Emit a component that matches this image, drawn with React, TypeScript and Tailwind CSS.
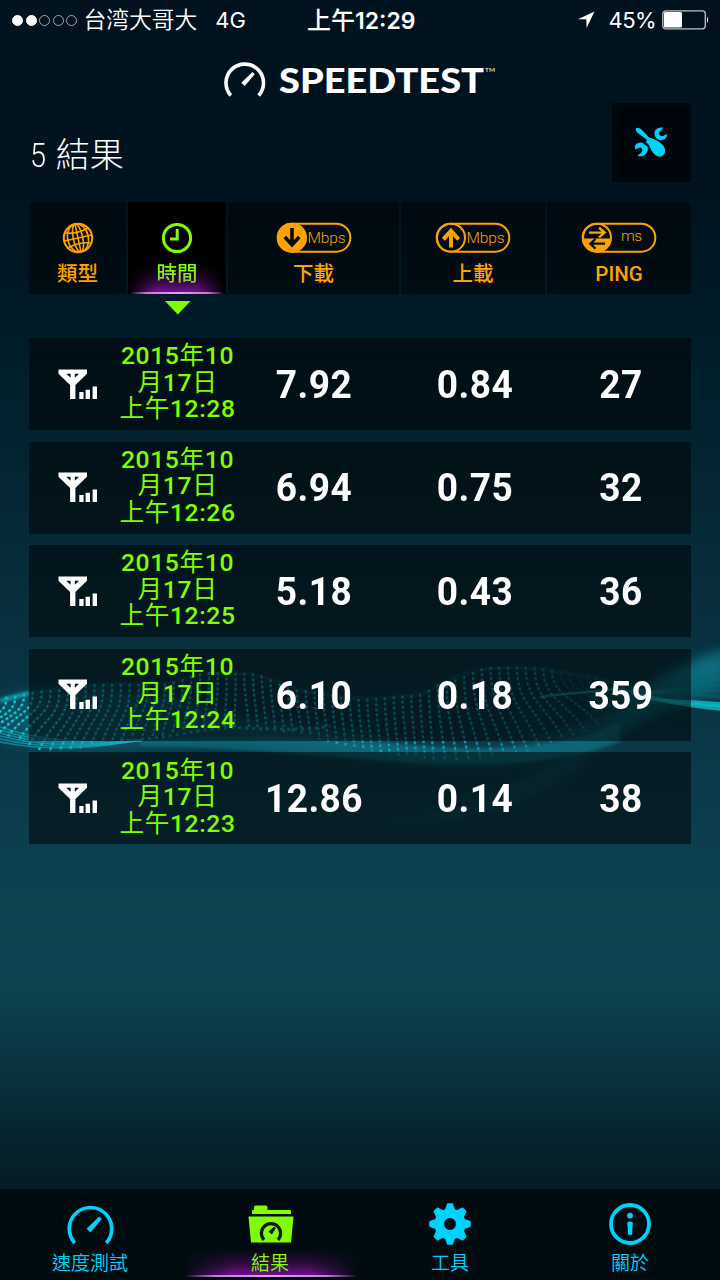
import type { ReactNode } from 'react'

const CJK = "font-['Roboto','Noto_Sans_CJK_TC',sans-serif]"

const RESULTS = [
  { time: '12:28', down: '7.92', up: '0.84', ping: '27' },
  { time: '12:26', down: '6.94', up: '0.75', ping: '32' },
  { time: '12:25', down: '5.18', up: '0.43', ping: '36' },
  { time: '12:24', down: '6.10', up: '0.18', ping: '359' },
  { time: '12:23', down: '12.86', up: '0.14', ping: '38' },
]

// [x, y] envelopes of the particle wave
const UPPER = [[0, 697], [50, 690], [100, 684], [160, 684], [210, 672], [250, 673], [300, 690], [360, 699], [415, 695], [450, 680], [490, 667], [530, 667], [590, 677], [640, 688], [730, 702]]
const LOWER = [[0, 735], [50, 752], [100, 746], [140, 738], [200, 728], [240, 727], [300, 734], [340, 745], [400, 756], [460, 762], [520, 752], [570, 738], [620, 715], [660, 704], [730, 710]]

function sample(points: number[][], x: number) {
  for (let i = 1; i < points.length; i++) {
    const [x1, y1] = points[i]
    const [x0, y0] = points[i - 1]
    if (x <= x1) {
      const t = (x - x0) / (x1 - x0)
      return y0 + (y1 - y0) * t * t * (3 - 2 * t)
    }
  }
  return points[points.length - 1][1]
}

function Wave() {
  const columns = Array.from({ length: 80 }, (_, i) => {
    const x = -20 + i * 8.8
    const lean = x < 240 ? -44 + (x + 20) * 0.17 : x < 430 ? 5 : 5 + (x - 430) * 0.34
    const top = sample(UPPER, Math.max(0, x))
    const bottom = sample(LOWER, Math.max(0, x + lean))
    const mid = (top + bottom) / 2
    return { x, d: `M${x} ${top} C${x + 1} ${mid} ${x + lean * 0.5} ${mid} ${x + lean} ${bottom}` }
  })
  return (
    <svg className="pointer-events-none absolute inset-0" width="720" height="1280" viewBox="0 0 720 1280" fill="none">
      <defs>
        <filter id="soft" x="-20%" y="-60%" width="140%" height="220%">
          <feGaussianBlur stdDeviation="6" />
        </filter>
        <filter id="thin" x="-20%" y="-60%" width="140%" height="220%">
          <feGaussianBlur stdDeviation="1.5" />
        </filter>
        <linearGradient id="edge" x1="0" x2="720" y1="0" y2="0" gradientUnits="userSpaceOnUse">
          <stop offset="0" stopColor="#12d4e2" />
          <stop offset=".2" stopColor="#10b4c2" stopOpacity=".85" />
          <stop offset=".65" stopColor="#10aabb" stopOpacity=".85" />
          <stop offset=".9" stopColor="#0d8ea0" stopOpacity=".4" />
        </linearGradient>
      </defs>
      <path
        d="M0 697 C80 680 160 684 240 720 C320 720 400 750 460 750 C560 750 620 705 720 655 L720 690 C660 700 580 760 520 764 C400 770 300 745 200 742 C100 756 40 754 0 740Z"
        fill="#0c8193" opacity=".36" filter="url(#soft)"
      />
      <path d="M340 815 C480 830 560 760 640 700 C670 678 695 658 730 648 L730 695 C650 705 610 745 560 780 C500 820 420 830 340 815Z" fill="#0b6c7c" opacity=".32" filter="url(#soft)" />
      <path d="M615 710 C660 672 690 655 730 650 L730 678 C690 680 660 690 615 710Z" fill="#0b8294" opacity=".5" filter="url(#soft)" />
      <path d="M140 741 C240 733 330 738 400 744 S520 752 590 735 L620 722 V742 C560 765 470 768 400 762 S240 748 140 746Z" fill="#0d8b9c" opacity=".4" filter="url(#thin)" />
      <g stroke="url(#edge)">
        {columns.map((c) => (
          <g key={c.x} opacity={c.x > 560 ? 0.4 : 0.95}>
            <path d={c.d} strokeWidth="2.4" strokeDasharray="2.4 2.8" />
            <path d={c.d} strokeWidth="2" opacity=".22" />
          </g>
        ))}
      </g>
      <path d="M0 699 C80 682 120 684 170 683 C210 668 250 668 300 690 C350 702 400 700 430 691 C470 662 520 663 590 677 C640 688 670 698 720 706" stroke="#0e8596" strokeWidth="3" opacity=".3" filter="url(#thin)" />
      {[0, 3, 6, 9, 12, 15].map((o) => (
        <path key={o} d={`M0 ${727 + o} C40 ${741 + o * 0.6} 90 ${744 + o * 0.4} 142 ${741 - o * 0.1}`} stroke="#10b3c2" strokeWidth="1.6" opacity=".6" />
      ))}
      <path d="M120 741 C190 736 205 726 240 728 C270 729 300 731 330 726" stroke="#10a3b2" strokeWidth="3" strokeDasharray="3 4" opacity=".8" />
      <path d="M0 701 L29 693" stroke="#14b9c8" strokeWidth="4" opacity=".7" filter="url(#thin)" />
      <path d="M540 697 C570 692 590 693 625 688 M625 690 C665 702 690 704 722 706" stroke="#0fc0cd" strokeWidth="2.5" opacity=".5" />
      <path d="M650 698 L722 702 V711 Q690 708 650 700Z" fill="#0fc0cd" opacity=".75" />
      {[0, 1, 2, 3].map((i) => (
        <path key={i} d={`M590 ${712 - i * 5} C640 ${696 - i * 3} 680 ${685 + i * 3} 724 ${679 + i * 6}`} stroke="#0e8fa0" strokeWidth="2.5" opacity=".3" filter="url(#thin)" />
      ))}
    </svg>
  )
}

function Gauge({ size, width = 3.6 }: { size: number; width?: number }) {
  return (
    <svg width={size} height={size * 0.87} viewBox="0 0 46 40" fill="none">
      <path d="M7.6 38.2 A20.8 20.8 0 1 1 38.4 38.2" stroke="currentColor" strokeWidth={width} />
      <path d="M19.2 24.2 L31.5 12.3 L34 14.7 L23 27.8Z" fill="currentColor" />
    </svg>
  )
}

function StatusBar() {
  return (
    <div className={`relative flex h-10 items-center text-white ${CJK}`}>
      <div className="flex items-center gap-[2.6px] pl-3">
        {[0, 1, 2, 3, 4].map((i) => (
          <span key={i} className={`size-[11px] rounded-full border ${i < 2 ? 'border-white bg-white' : 'border-white/60'}`} />
        ))}
      </div>
      <span className="mt-[2px] ml-[6px] text-[22.8px] leading-10 font-[350]">台湾大哥大</span>
      <span className="ml-[18px] font-['Inter'] text-[22px] leading-10">4G</span>
      <span className="absolute top-px left-[307px] flex text-[24px] leading-10 font-medium">
        上午<span className="font-['Inter'] text-[23px] font-semibold">12:29</span>
      </span>
      <div className="ml-auto flex items-center pr-[10px]">
        <svg width="17" height="18" viewBox="0 0 17 18" className="mr-[14px]">
          <path d="M16.5 .5 L0 8.2 H8.3 L8.6 17Z" fill="white" />
        </svg>
        <span className="font-['Inter'] text-[22px] leading-10 tracking-[-0.6px]">45%</span>
        <svg width="48" height="20" viewBox="0 0 48 20" className="ml-[6px]" fill="none">
          <rect x=".8" y=".8" width="42.5" height="18" rx="3" stroke="white" strokeOpacity=".75" strokeWidth="1.3" />
          <rect x="2" y="2" width="18" height="15.6" rx="1.4" fill="white" />
          <path d="M45 6.5 Q47.5 9.8 45 13Z" fill="white" />
        </svg>
      </div>
    </div>
  )
}

function Logo() {
  return (
    <div className="flex h-[63px] pl-[224px] text-white">
      <div className="mt-[21px]">
        <Gauge size={41.5} width={4} />
      </div>
      <svg width="220" height="50" viewBox="0 0 220 50" className="ml-[12px] mt-[14px]" fill="white">
        <text x="1" y="38.6" textLength="205" lengthAdjust="spacingAndGlyphs" className="font-['Lato'] text-[35px] font-black">SPEEDTEST</text>
        <text x="207" y="17.5" textLength="10" lengthAdjust="spacingAndGlyphs" className="font-['Lato'] text-[6.5px]">TM</text>
      </svg>
    </div>
  )
}

function ToolsIcon() {
  return (
    <svg width="34" height="31" viewBox="0 0 34 31" fill="none" className="mr-px">
      <path d="M2 1.2 Q4.5 -.3 7.5 2.6 L14.8 10.2 L18 11.4 Q25 13.6 29.600 18.900 Q33 25 29 28.6 Q25 31.5 20.2 27 Q16.2 22.8 15 18 L12 15.200 L13 12.800 L4.4 6.5 Q.8 3.6 2 1.2Z" fill="#00d2ff" />
      <path d="M29.5 .5 Q22.6 -.3 20.7 4.5 Q19.8 8.6 22.6 11.5 Q27 14.8 31.3 11.6 Q33.4 9.6 33 7 L28.3 9.3 Q24.8 9 25.1 5.3Z" fill="#00d2ff" />
      <path d="M.8 19.8 Q1.6 15.8 6.6 15.4 Q9 15.2 10.5 17.400 L13.800 19.800 L13.800 22 Q13.6 27.4 8.3 29 Q5.4 29.8 3.6 28.4 L7.7 25.3 Q9.2 22 6.2 20.3 L1.4 22.6Z" fill="#00d2ff" />
    </svg>
  )
}

function GlobeIcon() {
  return (
    <svg width="32" height="32" viewBox="0 0 32 32" fill="none" stroke="#ffa200" strokeWidth="1.6">
      <circle cx="16" cy="16" r="14.2" strokeWidth="2" />
      <g transform="rotate(-12 16 16)">
        <ellipse cx="16" cy="16" rx="4.8" ry="14.2" />
        <ellipse cx="16" cy="16" rx="10.4" ry="14.2" />
        <path d="M16 2V30M2 16H30M4.5 8.5Q16 12 27.5 8.5M4.5 23.5Q16 20 27.5 23.5" />
      </g>
    </svg>
  )
}

function ClockIcon() {
  return (
    <svg width="32" height="32" viewBox="0 0 32 32" fill="none" stroke="#80ff00" strokeWidth="3">
      <circle cx="16" cy="16" r="13.6" />
      <path d="M16.2 7V17H9" />
    </svg>
  )
}

function Pill({ unit, children }: { unit: string; children: ReactNode }) {
  return (
    <svg width="76" height="32" viewBox="0 0 76 32" fill="none" stroke="#ffa200" strokeWidth="2">
      <rect x="1.7" y="1.7" width="72.6" height="28" rx="14" />
      {children}
      <text
        x={unit === 'ms' ? 40 : 31.5}
        y={unit === 'ms' ? 18.5 : 20.5}
        textLength={unit === 'ms' ? 21 : 38}
        stroke="none"
        fill="#ffa200"
        className="font-['Roboto'] text-[15.5px] font-light"
      >
        {unit}
      </text>
    </svg>
  )
}

function DownPill() {
  return (
    <Pill unit="Mbps">
      <circle cx="16" cy="15.7" r="14" fill="#ffa200" />
      <path d="M16 6V22.5M8.8 15L16 22.8L23.2 15" stroke="#020c12" strokeWidth="3.6" />
    </Pill>
  )
}

function UpPill() {
  return (
    <Pill unit="Mbps">
      <circle cx="16" cy="15.7" r="14" />
      <path d="M16 25.5V9M8.4 17.4L16 8.8L23.6 17.4" strokeWidth="4" />
    </Pill>
  )
}

function PingPill() {
  return (
    <Pill unit="ms">
      <circle cx="16" cy="15.7" r="14" />
      <path d="M2 16.4H30A14 14 0 0 1 2 16.4Z" fill="#ffa200" stroke="none" />
      <path d="M8 10.6H23M18 5.6L23.6 10.6L18 15.4" strokeWidth="2.4" />
      <path d="M24 21.7H9.5M14.5 17L9.3 21.7L14.5 26.6" stroke="#020c12" strokeWidth="2.2" />
    </Pill>
  )
}

function Glow({ className }: { className: string }) {
  return (
    <div className={`absolute ${className}`}>
      <div className="h-full bg-linear-to-t from-[#7a1199] via-[#3f0a52]/70 to-transparent mask-[linear-gradient(90deg,transparent,black_28%,black_72%,transparent)]" />
      <div className="absolute inset-x-0 bottom-0 h-[2px] bg-[linear-gradient(90deg,transparent,#c77bdc_18%,#dfa0ee_50%,#c77bdc_82%,transparent)]" />
    </div>
  )
}

function HeaderCell({ icon, label, active }: { icon: ReactNode; label: string; active?: boolean }) {
  return (
    <div className={`relative flex flex-col items-center pt-[20px] ${active ? 'bg-black' : 'bg-black/50'}`}>
      {active && <Glow className="inset-x-[2px] bottom-0 h-[28px]" />}
      {icon}
      <span className={`relative mt-[4px] text-[20.5px] leading-8 font-medium ${active ? 'bg-linear-to-b from-[#80ff00] from-40% to-[#93b04c] to-85% bg-clip-text text-transparent' : 'text-[#ffa200]'}`}>{label}</span>
    </div>
  )
}

function SignalIcon() {
  return (
    <svg width="40" height="31" viewBox="0 0 40 31" fill="none">
      <path d="M.5 .5H29V4.8L17.4 16V30H12.1V16L.5 4.8Z" fill="white" />
      <path d="M8.200 4.8H12.6V8.800Z M16.8 4.8H21.200L16.8 8.800Z" fill="#03151b" />
      <path d="M21.3 23H25.6V30H21.3ZM27.6 20.7H32V30H27.6ZM34.6 17.5H39V30H34.6Z" fill="white" />
    </svg>
  )
}

function Row({ time, down, up, ping }: (typeof RESULTS)[number]) {
  const value = 'scale-x-[.95] pt-[2px] text-center text-[39px] font-bold text-white tracking-[0.5px]'
  return (
    <div className="grid h-[92px] grid-cols-[98px_101px_172px_150px_142px] items-center bg-black/50">
      <div className="flex justify-center">
        <SignalIcon />
      </div>
      <div className="-mx-2 -mt-[2px] text-center text-[24.7px] leading-[26.5px] tracking-[0.6px] text-[#80ff00]">
        <p>
          <b className="font-medium">2015</b>年<b className="font-medium">10</b>
        </p>
        <p>
          月<b className="font-medium">17</b>日
        </p>
        <p>
          上午<b className="font-medium">{time}</b>
        </p>
      </div>
      <div className={value}>{down}</div>
      <div className={value}>{up}</div>
      <div className={value}>{ping}</div>
    </div>
  )
}

function FolderIcon() {
  return (
    <svg width="46" height="38" viewBox="0 0 46 38" fill="none" className="ml-px">
      <path d="M4 9V5.6Q4 5 4.8 5H6V2Q6 .5 7.5 .5H18Q19.5 .5 19.5 2V5H41.5Q43 5 43 6.4V9Z" fill="#80ff00" />
      <path d="M.5 11.5H45.5L43 37.5H3Z" fill="#80ff00" />
      <path d="M16 34.8A9.6 9.6 0 1 1 30 34.8" stroke="#04100c" strokeWidth="3.2" />
      <path d="M20.5 26.5L26 21.7L27.8 23L24 29.5Z" fill="#04100c" />
    </svg>
  )
}

function GearIcon() {
  const teeth = [0, 45, 90, 135, 180, 225, 270, 315]
  return (
    <svg width="42" height="42" viewBox="0 0 42 42" fill="none">
      <circle cx="21" cy="21" r="10.8" stroke="#00d2ff" strokeWidth="9.6" />
      {teeth.map((a) => (
        <path key={a} d="M15.5 8L18 .8Q18.3 .2 19 .2H23Q23.7 .2 24 .8L26.5 8Z" fill="#00d2ff" transform={`rotate(${a} 21 21)`} />
      ))}
    </svg>
  )
}

function InfoIcon() {
  return (
    <svg width="42" height="42" viewBox="0 0 42 42" fill="none">
      <circle cx="21" cy="21" r="19" stroke="#00d2ff" strokeWidth="3.8" />
      <circle cx="21" cy="12.6" r="2.9" fill="#00d2ff" />
      <path d="M18.2 19.5Q21 17.5 23.8 19.5L23 31.5Q21 33 19.2 31.5Z" fill="#00d2ff" />
    </svg>
  )
}

function Tab({ icon, label, active }: { icon: ReactNode; label: string; active?: boolean }) {
  return (
    <div className={`relative flex flex-1 flex-col items-center ${active ? 'text-[#80ff00]' : 'text-[#00d2ff]'}`}>
      {active && <Glow className="right-[3px] bottom-[3px] left-[5px] h-[28px]" />}
      <div className="flex h-[58px] items-center justify-center pt-[12px]">{icon}</div>
      <span className="relative mt-[2px] text-[19px] leading-[30px] font-[350]">{label}</span>
    </div>
  )
}

export default function App() {
  return (
    <div className={`relative flex h-[1280px] w-[720px] flex-col overflow-hidden bg-[linear-gradient(180deg,#00121e_0px,#00131f_190px,#001a27_300px,#03222f_430px,#09303f_630px,#0a3747_730px,#0c3f4e_850px,#0e4451_940px,#0e4451_980px,#0a3441_1060px,#06262f_1130px,#041c24_1189px)] ${CJK}`}>
      <Wave />
      <div className="relative flex flex-1 flex-col">
        <StatusBar />
        <Logo />
        <div className="flex h-[79px] justify-between pr-[29px] pl-[30px]">
          <h1 className="mt-[28px] text-[34px] leading-[48px] font-light text-white">
            <span className="mr-[9px] inline-block origin-left scale-x-[.85]">5</span>
            <span className="-ml-[2px]">結果</span>
          </h1>
          <div className="flex size-[79px] items-center justify-center bg-black/60">
            <ToolsIcon />
          </div>
        </div>
        <div className="mx-[29px] mt-[20px] grid h-[92px] grid-cols-[97px_98px_171px_144px_144px] gap-[2px]">
          <HeaderCell icon={<GlobeIcon />} label="類型" />
          <HeaderCell icon={<ClockIcon />} label="時間" active />
          <HeaderCell icon={<DownPill />} label="下載" />
          <HeaderCell icon={<UpPill />} label="上載" />
          <HeaderCell icon={<PingPill />} label="PING" />
        </div>
        <svg width="26" height="14" viewBox="0 0 26 14" className="mt-[7px] ml-[165px]">
          <path d="M0 0H25.5L12.8 13.5Z" fill="#80ff00" />
        </svg>
        <div className="mx-[29px] mt-[23px] flex flex-col gap-[11.6px]">
          {RESULTS.map((r) => (
            <Row key={r.time} {...r} />
          ))}
        </div>
        <nav className="mt-auto flex h-[91px] bg-[#010c10]">
          <Tab icon={<Gauge size={47} />} label="速度測試" />
          <Tab icon={<FolderIcon />} label="結果" active />
          <Tab icon={<GearIcon />} label="工具" />
          <Tab icon={<InfoIcon />} label="關於" />
        </nav>
      </div>
    </div>
  )
}
